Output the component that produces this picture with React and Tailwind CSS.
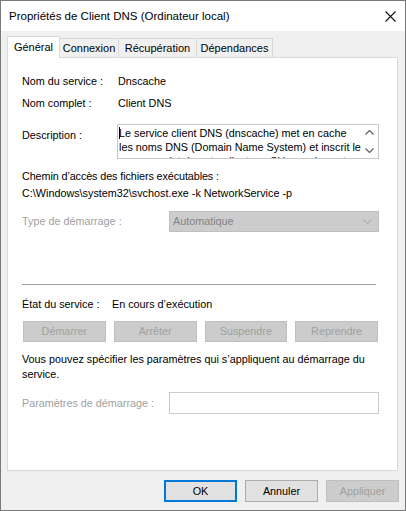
const Chevron = ({ up = false, color = '#606060' }) => (
  <svg width="9" height="5" viewBox="0 0 9 5" className="block">
    <path
      d={up ? 'M0.5 4.5 L4.5 0.5 L8.5 4.5' : 'M0.5 0.5 L4.5 4.5 L8.5 0.5'}
      fill="none"
      stroke={color}
      strokeWidth="1.2"
    />
  </svg>
);

const Tab = ({ label, active, width }) =>
  active ? (
    <div
      className={`${width} h-[22px] -mb-px relative z-10 bg-white border border-b-0 border-[#d9d9d9] flex items-start justify-center pt-[3px]`}
    >
      {label}
    </div>
  ) : (
    <div
      className={`${width} h-[19px] bg-[#f0f0f0] border border-b-0 border-l-0 border-[#d9d9d9] flex items-start justify-center pt-[2px]`}
    >
      {label}
    </div>
  );

const DisabledBtn = ({ label }) => (
  <div className="h-[21px] bg-[#cccccc] border border-[#bfbfbf] flex items-center justify-center text-[#a0a0a0]">
    {label}
  </div>
);

export default function App() {
  return (
    <div
      className="w-[406px] h-[511px] border border-[#7a7a7a] bg-[#f0f0f0] flex flex-col text-[10.8px] leading-[15px] text-black"
      style={{ fontFamily: '"Liberation Sans", Arial, sans-serif' }}
    >
      {/* title bar */}
      <div className="h-[30px] bg-white flex items-center justify-between pl-[8px] pr-[9px] shrink-0">
        <span className="text-[11.5px]">Propriétés de Client DNS (Ordinateur local)</span>
        <svg width="11" height="11" viewBox="0 0 11 11">
          <path d="M0.5 0.5 L10.5 10.5 M10.5 0.5 L0.5 10.5" stroke="#111" strokeWidth="1.1" />
        </svg>
      </div>

      {/* tabs */}
      <div className="flex items-end pl-[6px] mt-[5px] text-[11px]">
        <Tab label="Général" active width="w-[53px]" />
        <Tab label="Connexion" width="w-[59px]" />
        <Tab label="Récupération" width="w-[78px]" />
        <Tab label="Dépendances" width="w-[76px]" />
      </div>

      {/* panel */}
      <div className="ml-[6px] w-[391px] h-[414px] bg-white border border-[#d9d9d9] flex flex-col pl-[14px]">
        <div className="flex mt-[16px]">
          <span className="w-[96px]">Nom du service :</span>
          <span>Dnscache</span>
        </div>
        <div className="flex mt-[7px]">
          <span className="w-[96px]">Nom complet :</span>
          <span>Client DNS</span>
        </div>
        <div className="flex items-start mt-[13px]">
          <span className="w-[95px] mt-[4px]">Description :</span>
          <div className="w-[262px] h-[35px] border border-[#c8c8c8] flex overflow-hidden">
            <div className="flex-1 pl-[1px] pt-[1px] leading-[14px] overflow-hidden relative">
              <span className="absolute left-[1px] top-[2px] w-px h-[12px] bg-black" />
              Le service client DNS (dnscache) met en cache les noms DNS (Domain Name System) et inscrit le nom complet de cet ordinateur. Si le service est
            </div>
            <div className="w-[17px] flex flex-col items-center justify-between py-[5px]">
              <Chevron up />
              <Chevron />
            </div>
          </div>
        </div>
        <div className="mt-[10px] tracking-[-0.1px]">Chemin d’accès des fichiers exécutables :</div>
        <div className="mt-[2px]">C:\Windows\system32\svchost.exe -k NetworkService -p</div>
        <div className="flex items-center mt-[10px] text-[#a0a0a0]">
          <span className="w-[147px]">Type de démarrage :</span>
          <div className="w-[210px] h-[21px] bg-[#cccccc] border border-[#bfbfbf] flex items-center justify-between pl-[3px] pr-[6px] text-[#838383]">
            <span>Automatique</span>
            <Chevron color="#b0b0b0" />
          </div>
        </div>
        <div className="w-[354px] mt-[52px] border-t border-[#a0a0a0]" />
        <div className="flex mt-[12px]">
          <span className="w-[90px]">État du service :</span>
          <span>En cours d’exécution</span>
        </div>
        <div className="ml-[1px] w-[355px] grid grid-cols-4 gap-[8px] mt-[9px]">
          <DisabledBtn label="Démarrer" />
          <DisabledBtn label="Arrêter" />
          <DisabledBtn label="Suspendre" />
          <DisabledBtn label="Reprendre" />
        </div>
        <div className="mt-[10px]">
          Vous pouvez spécifier les paramètres qui s’appliquent au démarrage du
          <br />
          service.
        </div>
        <div className="flex items-center mt-[10px] text-[#a0a0a0]">
          <span className="w-[147px]">Paramètres de démarrage :</span>
          <div className="w-[210px] h-[22px] bg-white border border-[#cccccc]" />
        </div>
      </div>

      {/* footer buttons */}
      <div className="flex justify-end gap-[8px] pr-[6px] mt-[9px]">
        <div className="w-[73px] h-[22px] bg-[#e1e1e1] border-2 border-[#0078d7] flex items-center justify-center">
          OK
        </div>
        <div className="w-[73px] h-[22px] bg-[#e1e1e1] border border-[#adadad] flex items-center justify-center">
          Annuler
        </div>
        <div className="w-[73px] h-[22px] bg-[#cccccc] border border-[#bfbfbf] flex items-center justify-center text-[#a0a0a0]">
          Appliquer
        </div>
      </div>
    </div>
  );
}
